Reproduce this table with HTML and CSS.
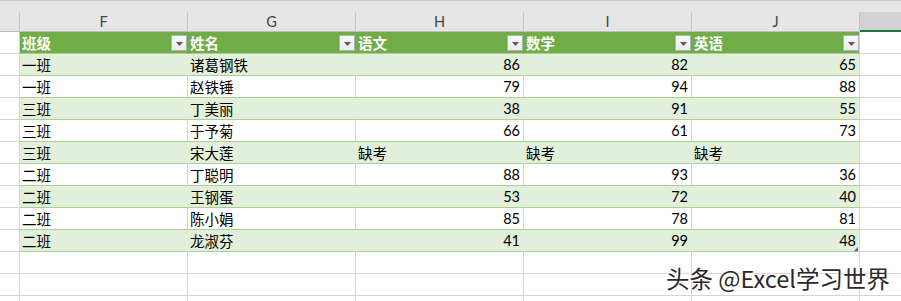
FILE: index.html
```html
<!DOCTYPE html>
<html lang="zh">
<head>
<meta charset="utf-8">
<title>Sheet</title>
<link rel="stylesheet" href="styles.css">
</head>
<body>
<div class="sheet">
  <div class="topband"></div>
  <div class="row colhead">
    <div class="corner"></div>
    <div class="ch">F</div>
    <div class="ch">G</div>
    <div class="ch">H</div>
    <div class="ch">I</div>
    <div class="ch">J</div>
    <div class="ch sel"></div>
  </div>
  <div class="row thead">
    <div class="rh"></div>
    <div class="c"><span>班级</span><span class="fb"></span></div>
    <div class="c"><span>姓名</span><span class="fb"></span></div>
    <div class="c"><span>语文</span><span class="fb"></span></div>
    <div class="c"><span>数学</span><span class="fb"></span></div>
    <div class="c last"><span>英语</span><span class="fb"></span></div>
    <div class="k"></div>
  </div>
  <div class="row band">
    <div class="rh"></div><div class="c">一班</div><div class="c">诸葛钢铁</div><div class="c n">86</div><div class="c n">82</div><div class="c n last">65</div><div class="k"></div>
  </div>
  <div class="row plain">
    <div class="rh"></div><div class="c">一班</div><div class="c">赵铁锤</div><div class="c n">79</div><div class="c n">94</div><div class="c n last">88</div><div class="k"></div>
  </div>
  <div class="row band">
    <div class="rh"></div><div class="c">三班</div><div class="c">丁美丽</div><div class="c n">38</div><div class="c n">91</div><div class="c n last">55</div><div class="k"></div>
  </div>
  <div class="row plain">
    <div class="rh"></div><div class="c">三班</div><div class="c">于予菊</div><div class="c n">66</div><div class="c n">61</div><div class="c n last">73</div><div class="k"></div>
  </div>
  <div class="row band">
    <div class="rh"></div><div class="c">三班</div><div class="c">宋大莲</div><div class="c">缺考</div><div class="c">缺考</div><div class="c last">缺考</div><div class="k"></div>
  </div>
  <div class="row plain">
    <div class="rh"></div><div class="c">二班</div><div class="c">丁聪明</div><div class="c n">88</div><div class="c n">93</div><div class="c n last">36</div><div class="k"></div>
  </div>
  <div class="row band">
    <div class="rh"></div><div class="c">二班</div><div class="c">王钢蛋</div><div class="c n">53</div><div class="c n">72</div><div class="c n last">40</div><div class="k"></div>
  </div>
  <div class="row plain">
    <div class="rh"></div><div class="c">二班</div><div class="c">陈小娟</div><div class="c n">85</div><div class="c n">78</div><div class="c n last">81</div><div class="k"></div>
  </div>
  <div class="row band">
    <div class="rh"></div><div class="c">二班</div><div class="c">龙淑芬</div><div class="c n">41</div><div class="c n">99</div><div class="c n last">48<span class="handle"></span></div><div class="k"></div>
  </div>
  <div class="row empty">
    <div class="rh"></div><div class="e"></div><div class="e"></div><div class="e"></div><div class="e"></div><div class="e"></div><div class="k"></div>
  </div>
  <div class="row empty">
    <div class="rh"></div><div class="e"></div><div class="e"></div><div class="e"></div><div class="e"></div><div class="e"></div><div class="k"></div>
  </div>
  <div class="row empty">
    <div class="rh"></div><div class="e"></div><div class="e"></div><div class="e"></div><div class="e"></div><div class="e"></div><div class="k"></div>
  </div>
  <div class="watermark">头条 @Excel学习世界</div>
</div>
</body>
</html>
```

FILE: styles.css
```css
* { box-sizing: border-box; }
html, body { margin: 0; padding: 0; background: #fff; }
body { width: 901px; height: 301px; overflow: hidden; }

.sheet {
  position: relative;
  width: 901px;
  height: 301px;
  overflow: hidden;
  font-family: "Lato", "Noto Sans CJK SC", sans-serif;
  font-size: 14.5px;
  color: #000;
}

.topband {
  height: 12px;
  background: #e6e6e6;
  border-top: 1px solid #c8c8c8;
}

.row {
  display: grid;
  grid-template-columns: 20px repeat(5, 168px) 1fr;
  height: 22px;
}

/* column letters */
.colhead { height: 20px; background: #e6e6e6; }
.corner {
  border-right: 1px solid #c6c6c6;
  border-bottom: 1px solid #bdbdbd;
}
.ch {
  display: flex;
  align-items: center;
  justify-content: center;
  color: #444;
  border-right: 1px solid #c6c6c6;
  border-bottom: 1px solid #bdbdbd;
  font-size: 14.5px;
}
.ch.sel {
  background: #d2d2d2;
  border-right: none;
  border-bottom: 2px solid #217346;
}

/* generic cells */
.rh {
  border-right: 1px solid #d4d4d4;
  border-bottom: 1px solid #d4d4d4;
}
.k { border-bottom: 1px solid #d4d4d4; }
.e {
  border-right: 1px solid #d4d4d4;
  border-bottom: 1px solid #d4d4d4;
}

.c {
  display: flex;
  align-items: center;
  padding: 0 3px 0 2px;
  white-space: nowrap;
  border-bottom: 1px solid #a9d08e;
  border-right: 1px solid #d4d4d4;
}
.c.n { justify-content: flex-end; padding-right: 3px; }

/* table header */
.thead .c {
  background: #70ad47;
  color: #fff;
  font-weight: bold;
  justify-content: space-between;
  padding-right: 0;
  border-right-color: #70ad47;
}
.thead .c.last { border-right-color: #c6d9b8; }

.fb {
  position: relative;
  width: 16px;
  height: 16px;
  margin-top: 1px;
  border: 1px solid #b2b2b2;
  background: linear-gradient(#fafafa, #ececec);
}
.fb::after {
  content: "";
  position: absolute;
  left: 4px;
  top: 6px;
  width: 7px;
  height: 4px;
  background: #5a5a5a;
  clip-path: polygon(0 0, 100% 0, 50% 100%);
}

/* banded rows */
.band .c { background: #e2efda; border-right-color: #e2efda; }
.band .c.last { border-right-color: #d4d4d4; }
.plain .c { background: #fff; }

.c.last { position: relative; }
.handle {
  position: absolute;
  right: 1px;
  bottom: 0;
  width: 0;
  height: 0;
  border-left: 4px solid transparent;
  border-bottom: 4px solid #4a5dc4;
}

.watermark {
  position: absolute;
  right: 11px;
  top: 264px;
  font-family: "Noto Sans CJK SC", sans-serif;
  font-size: 23.5px;
  line-height: 28px;
  color: #2a2a2a;
  white-space: nowrap;
  text-shadow: 0 0 1px #fff, 0 0 2px #fff, 1px 1px 1px #fff, -1px -1px 1px #fff;
}
```
